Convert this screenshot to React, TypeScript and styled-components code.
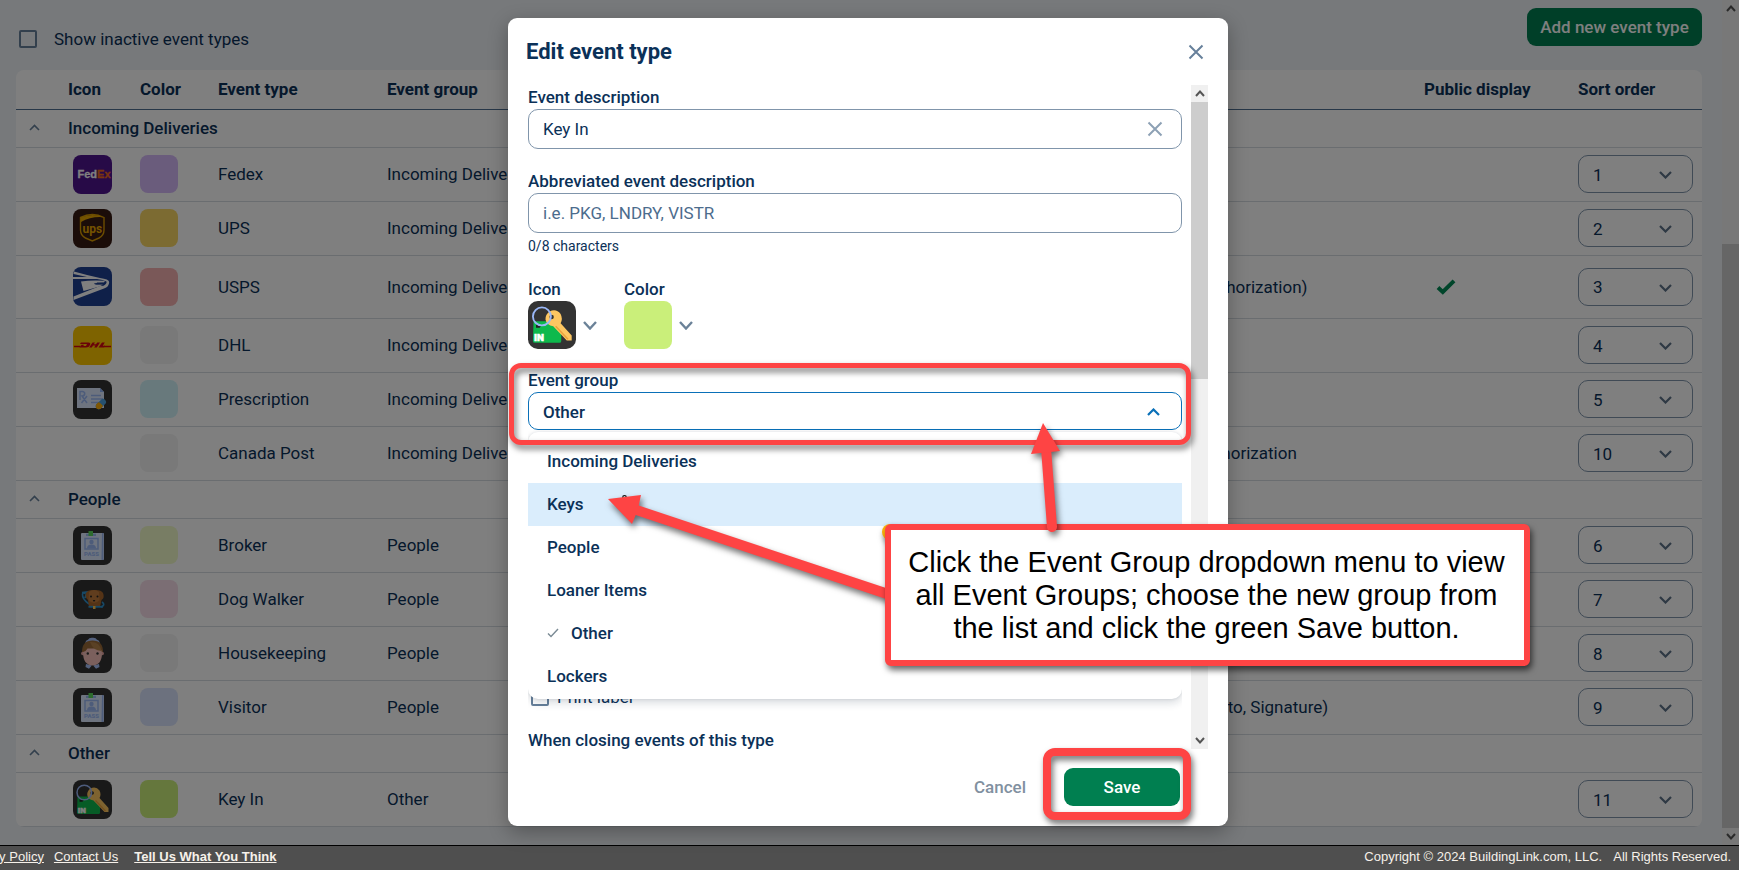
import React from 'react';
import styled, { createGlobalStyle, css } from 'styled-components';

const NAVY = '#0b3158';
const STEEL = '#8095ab';
const GREEN = '#007f50';
const RED = '#fe4444';
const UI_FONT = 'Roboto, "Liberation Sans", sans-serif';

const GlobalStyle = createGlobalStyle`
  *, *::before, *::after { box-sizing: border-box; }
  body { margin: 0; font-family: ${UI_FONT}; font-size: 17px; line-height: 24px; color: ${NAVY}; }
  button, input, select { font: inherit; color: inherit; }
  button { cursor: pointer; }
`;

/* ---------- page shell ---------- */

const Page = styled.div`
  display: flex;
  flex-direction: column;
  height: 100vh;
  overflow: hidden;
  background: #eef2f6;
`;

const Viewport = styled.div`
  position: relative;
  display: flex;
  flex: 1;
  min-height: 0;
`;

const Content = styled.main`
  flex: 1;
  min-width: 0;
  padding: 0 20px 0 16px;
  overflow: hidden;
`;

const Toolbar = styled.div`
  display: flex;
  justify-content: space-between;
  align-items: flex-start;
  height: 70px;
  padding-top: 8px;
`;

const CheckLabel = styled.label<{ $top?: number; $gap: number }>`
  display: flex;
  align-items: center;
  gap: ${(p) => p.$gap}px;
  padding-left: 3px;
  margin-top: ${(p) => p.$top ?? 0}px;
`;

const CheckBox = styled.input`
  appearance: none;
  width: 18px;
  height: 18px;
  margin: 0;
  border: 2px solid #67809b;
  border-radius: 2px;
  background: transparent;
`;

const PrimaryButton = styled.button<{ $width: number }>`
  width: ${(p) => p.$width}px;
  height: 38px;
  padding: 0;
  border: 0;
  border-radius: 9px;
  background: ${GREEN};
  color: #fff;
  font-weight: 500;
`;

/* ---------- event table ---------- */

const TablePanel = styled.div`
  background: #fff;
  border-radius: 8px;
  overflow: hidden;
`;

const Table = styled.table`
  width: 100%;
  table-layout: fixed;
  border-collapse: separate;
  border-spacing: 0;
`;

const Col = styled.col<{ $width?: number }>`
  ${(p) => p.$width && css`width: ${p.$width}px;`}
`;

const HeadCell = styled.th`
  height: 40px;
  padding: 0 0 2px;
  border-bottom: 1px solid #4e6f90;
  text-align: left;
  font-weight: 700;
`;

const GroupCell = styled.td`
  height: 38px;
  padding: 0 0 2px;
  border-bottom: 1px solid #d5dae0;
  font-weight: 500;
`;

const Cell = styled.td<{ $tall?: boolean }>`
  height: ${(p) => (p.$tall ? 63 : 54)}px;
  padding: 0 0 1px;
  border-bottom: 1px solid #d5dae0;
  white-space: nowrap;
`;

const IconHolder = styled.div`
  display: flex;
  padding-left: 5px;
`;

const Swatch = styled.div<{ $color: string }>`
  width: 38px;
  height: 38px;
  border-radius: 8px;
  background: ${(p) => p.$color};
`;

const ToggleButton = styled.button`
  display: flex;
  margin-left: 13px;
  padding: 0;
  border: 0;
  background: none;
`;

const CheckHolder = styled.div`
  display: flex;
  padding-left: 12px;
`;

const OrderBox = styled.div`
  position: relative;
  width: 115px;
  height: 38px;
`;

const OrderSelect = styled.select`
  appearance: none;
  width: 100%;
  height: 100%;
  padding: 1px 14px 0;
  border: 1px solid ${STEEL};
  border-radius: 10px;
  background: transparent;
`;

const OrderArrow = styled.span`
  position: absolute;
  right: 21px;
  top: 16px;
  display: flex;
  pointer-events: none;
`;

/* ---------- scroll bars ---------- */

const ScrollTrack = styled.div`
  display: flex;
  flex-direction: column;
  flex: none;
  width: 17px;
  background: #f0f0f0;
`;

const ScrollEnd = styled.div`
  display: flex;
  flex: none;
  align-items: center;
  justify-content: center;
  height: 17px;
`;

const ScrollSpace = styled.div<{ $grow: number; $thumb?: boolean }>`
  flex: ${(p) => p.$grow} 1 0;
  background: ${(p) => (p.$thumb ? '#cdcdcd' : 'transparent')};
`;

/* ---------- site footer ---------- */

const SiteFooter = styled.footer`
  display: flex;
  justify-content: space-between;
  height: 25px;
  padding: 0 8px 3px 0;
  align-items: center;
  border-top: 1px solid #000;
  background: #4f4f4f;
  color: #f6f1ea;
  font-family: "Liberation Sans", Arial, sans-serif;
  font-size: 13px;
  white-space: nowrap;
  overflow: hidden;
`;

const FooterLinks = styled.nav`
  display: flex;
  gap: 10px;
  margin-left: -37px;
`;

const FooterLink = styled.a<{ $strong?: boolean }>`
  color: inherit;
  ${(p) => p.$strong && css`margin-left: 6px; font-weight: 700;`}
`;

const Legal = styled.div`
  display: flex;
  gap: 11px;
`;

/* ---------- dialog ---------- */

const Backdrop = styled.div`
  position: absolute;
  inset: 0;
  display: flex;
  justify-content: center;
  padding: 18px 3px 19px 0;
  background: rgba(0, 0, 0, 0.5);
`;

const Dialog = styled.section`
  position: relative;
  display: flex;
  flex-direction: column;
  width: 720px;
  border-radius: 9px;
  background: #fff;
  box-shadow: 0 6px 20px rgba(0, 0, 0, 0.3);
`;

const DialogHeader = styled.header`
  display: flex;
  align-items: center;
  justify-content: space-between;
  height: 67px;
  padding: 0 20px 0 18px;
`;

const DialogTitle = styled.h2`
  margin: 0;
  font-size: 22px;
  line-height: 26px;
  font-weight: 700;
`;

const GhostButton = styled.button`
  display: flex;
  align-items: center;
  justify-content: center;
  width: 24px;
  height: 24px;
  padding: 0;
  border: 0;
  background: none;
`;

const DialogBody = styled.div`
  display: flex;
  gap: 9px;
  flex: 1;
  min-height: 0;
  padding: 0 20px;
`;

const Form = styled.form`
  flex: 1;
  min-width: 0;
  overflow: hidden;
`;

const Field = styled.div`
  position: relative;
  margin-bottom: 20px;
`;

const FieldLabel = styled.label`
  display: block;
  height: 24px;
  font-weight: 500;
`;

const InputFrame = styled.div`
  display: flex;
  align-items: center;
  height: 40px;
  padding: 0 14px;
  border: 1px solid ${STEEL};
  border-radius: 10px;
`;

const TextInput = styled.input`
  flex: 1;
  min-width: 0;
  padding: 0;
  border: 0;
  outline: 0;
  background: none;
  &::placeholder { color: #4c6c8d; opacity: 1; }
`;

const Helper = styled.div`
  padding-top: 2px;
  line-height: 22px;
  font-size: 14px;
`;

const PickerRow = styled.div`
  display: flex;
  gap: 27px;
  margin-bottom: 19px;
`;

const Picker = styled.button`
  display: flex;
  align-items: center;
  gap: 7px;
  padding: 0;
  border: 0;
  background: none;
`;

const PickerColor = styled.span`
  width: 48px;
  height: 48px;
  border-radius: 8px;
  background: #caef7a;
`;

const GroupTrigger = styled.button`
  display: flex;
  align-items: center;
  justify-content: space-between;
  width: 100%;
  height: 38px;
  padding: 2px 21px 0 14px;
  border: 1px solid #0a70b8;
  border-radius: 10px;
  background: #fff;
  font-weight: 500;
`;

const Menu = styled.ul`
  position: absolute;
  z-index: 1;
  top: 100%;
  left: 0;
  right: 0;
  margin: 2px 0 0;
  padding: 8px 0 1px;
  border-radius: 10px;
  background: #fff;
  box-shadow: 0 4px 8px rgba(20, 40, 60, 0.16), 0 0 3px rgba(20, 40, 60, 0.12);
  list-style: none;
`;

const MenuItem = styled.li<{ $active?: boolean }>`
  display: flex;
  align-items: center;
  gap: 12px;
  height: 43px;
  padding: 0 0 1px 19px;
  background: ${(p) => (p.$active ? '#daedfc' : 'transparent')};
  font-weight: 500;
`;

const PrintRow = styled.div`
  margin: 255px 0 22px;
`;

const SectionTitle = styled.div`
  line-height: 18px;
  font-weight: 500;
`;

const DialogFooter = styled.footer`
  display: flex;
  flex: none;
  align-items: center;
  justify-content: flex-end;
  gap: 38px;
  height: 77px;
  padding: 0 48px 1px 0;
`;

const CancelButton = styled.button`
  padding: 0;
  border: 0;
  background: none;
  color: #8190a0;
  font-weight: 500;
`;

/* ---------- tutorial marks lying over the dialog ---------- */

const Highlight = styled.div<{ $x: number; $y: number; $w: number; $h: number; $line: number }>`
  position: absolute;
  z-index: 2;
  left: ${(p) => p.$x}px;
  top: ${(p) => p.$y}px;
  width: ${(p) => p.$w}px;
  height: ${(p) => p.$h}px;
  border: ${(p) => p.$line}px solid ${RED};
  border-radius: 12px;
  filter: drop-shadow(2px 4px 3px rgba(0, 0, 0, 0.55));
  pointer-events: none;
`;

const Callout = styled.div`
  position: absolute;
  z-index: 3;
  left: 377px;
  top: 506px;
  width: 645px;
  height: 142px;
  padding: 16px 2px 16px 0;
  border: 6px solid ${RED};
  border-radius: 6px;
  background: #fff;
  box-shadow: 2px 4px 6px rgba(0, 0, 0, 0.6);
  color: #000;
  font-family: "Liberation Sans", Arial, sans-serif;
  font-size: 29px;
  line-height: 33px;
  text-align: center;
  white-space: nowrap;
`;

const Arrows = styled.svg<{ $z: number }>`
  position: absolute;
  z-index: ${(p) => p.$z};
  left: 0;
  top: 0;
  filter: drop-shadow(2px 4px 3px rgba(0, 0, 0, 0.55));
  pointer-events: none;
`;

/* ---------- drawings ---------- */

type ChevronProps = { up?: boolean; w: number; h: number; color: string; stroke?: number };

const Chevron = ({ up, w, h, color, stroke = 2 }: ChevronProps) => (
  <svg width={w} height={h} viewBox={`0 0 ${w} ${h}`} aria-hidden="true">
    <path
      d={up ? `M1 ${h - 1}L${w / 2} 1.5L${w - 1} ${h - 1}` : `M1 1L${w / 2} ${h - 1.5}L${w - 1} 1`}
      fill="none"
      stroke={color}
      strokeWidth={stroke}
    />
  </svg>
);

const Cross = ({ color }: { color: string }) => (
  <svg width="16" height="16" viewBox="0 0 16 16" aria-hidden="true">
    <path d="M1.5 1.5L14.5 14.5M14.5 1.5L1.5 14.5" stroke={color} strokeWidth="2" />
  </svg>
);

const Tick = () => (
  <svg width="20" height="16" viewBox="0 0 20 16" aria-label="Yes" role="img">
    <path d="M2 8.5L6.8 13L18 1.8" fill="none" stroke="#008a55" strokeWidth="4" />
  </svg>
);

const Tile = ({ size = 39, fill, children }: { size?: number; fill: string; children: React.ReactNode }) => (
  <svg width={size} height={size} viewBox="0 0 39 39" aria-hidden="true">
    <rect width="39" height="39" rx="8" fill={fill} />
    {children}
  </svg>
);

const FedexIcon = () => (
  <Tile fill="#4f148f">
    <text x="4.5" y="23" fontFamily="Liberation Sans, sans-serif" fontSize="11" fontWeight="700" fill="#fff" stroke="#fff" strokeWidth="0.3">
      Fed<tspan fill="#f26a1b" stroke="#f26a1b">Ex</tspan>
    </text>
  </Tile>
);

const UpsIcon = () => (
  <Tile fill="#361a13">
    <path d="M7.5 8.5Q19.5 2.5 31 8.5V21Q31 26.5 26 29L19.3 32L12.5 29Q7.5 26.5 7.5 21Z" fill="none" stroke="#d99a00" strokeWidth="1.4" />
    <path d="M8 8.5Q19 3.5 30.6 8.2Q18 7.2 8 13Z" fill="#e9a600" />
    <text x="19.3" y="23.5" textAnchor="middle" fontFamily="Roboto, sans-serif" fontSize="12" fontWeight="700" fill="#e9a600">ups</text>
  </Tile>
);

const UspsIcon = () => (
  <Tile fill="#1f4092">
    <path d="M1 4.5Q15 8.5 27 11Q36 12 36.2 15Q36 20 31 21.5L0.5 33V29.5L27 19L30.5 18.8Q34 17 33.5 14.5Q30 12.5 24 12H0V10H14L0.5 7Z" fill="#fff" />
    <path d="M8 14.5Q18 13 32 13.8L31 15.5H24L23 17.5H30L26.5 19.5L10.5 24Z" fill="#fff" />
    <path d="M21 16.3L31 15.8L30 17.3L22 17.6Z" fill="#1f4092" />
  </Tile>
);

const DhlIcon = () => (
  <Tile fill="#fdc700">
    <path d="M1 20.5H7.5M31 20.5H38" stroke="#d40511" strokeWidth="1.6" />
    <path d="M8 16.5H15.5Q18 16.8 17 19Q16 21.5 13 21.5H6.5L8.6 18.8H11L10.3 20H13L14 18H7ZM19.5 16.5H22L20.8 18.3H23L24.2 16.5H27L23.8 21.5H21.2L22.4 19.5H20L18.8 21.5H16.2ZM29 16.5H31.8L29.8 19.8H32L31 21.5H25.5Z" fill="#d40511" />
  </Tile>
);

const RxIcon = () => (
  <Tile fill="#333">
    <path d="M4 8H27L31 12V28H4Z" fill="#dce8ff" />
    <path d="M27 8L31 12H27Z" fill="#8fb3f8" />
    <path d="M7 20V11.5H9.5Q12 12 11.7 14Q11.3 16 9 16L14 23M14 16L8.5 23" fill="none" stroke="#9bb8f5" strokeWidth="1.5" />
    <path d="M18 15.5H28M18 19H30M18 22.5H26" stroke="#9bb8f5" strokeWidth="1.3" />
    <path d="M25.8 26.2L30 22" stroke="#4da3e0" strokeWidth="6" strokeLinecap="round" />
    <path d="M25.8 26.2L28 24" stroke="#fcae0d" strokeWidth="6" />
    <circle cx="25.8" cy="26.2" r="3" fill="#fcae0d" />
  </Tile>
);

const PassIcon = () => (
  <Tile fill="#333">
    <rect x="8" y="7" width="23" height="27" rx="1" fill="#dce8ff" />
    <path d="M29 7H30.5V34H28.5Z" fill="#9bb8f5" />
    <rect x="12" y="12.5" width="13" height="10.5" fill="none" stroke="#9bb8f5" strokeWidth="1.5" />
    <circle cx="18.5" cy="16" r="2.2" fill="#9bb8f5" />
    <path d="M14 22.5Q14 18.5 18.5 18.5Q23 18.5 23 22.5Z" fill="#9bb8f5" />
    <path d="M13 7.8H23V10H13Z" fill="#9bb8f5" />
    <path d="M15.5 5H20V10H15.5Z" fill="#5bd65b" />
    <text x="18.6" y="30" textAnchor="middle" fontFamily="Roboto, sans-serif" fontSize="6" fontWeight="900" fill="#9bb8f5">PASS</text>
  </Tile>
);

const DogIcon = () => (
  <Tile fill="#333">
    <path d="M16 24Q9 19 9.5 14Q10.5 12 12.5 13.5M9 12.5L14 12L12 18M28 27Q33 25 29 22" fill="none" stroke="#2f93cf" strokeWidth="1.6" />
    <path d="M13 13Q15 9.5 21 10Q28 9.5 30 13Q32 18 28.5 20L27 27H16L15 20Q11.5 17 13 13Z" fill="#a9672c" />
    <path d="M16 12Q21 8 26 12L26.5 20Q21 26 15.5 20Z" fill="#c07b3c" />
    <circle cx="18" cy="16.5" r="1" fill="#222" />
    <circle cx="24.5" cy="16.5" r="1" fill="#222" />
    <path d="M19.8 20H22.4L21 22Z" fill="#222" />
    <path d="M15.5 26.8H30" stroke="#2f93cf" strokeWidth="1.8" />
    <path d="M20 26H22.5V29H20Z" fill="#ffc24a" />
  </Tile>
);

const MaidIcon = () => (
  <Tile fill="#333">
    <path d="M12.5 10Q12 6.5 15 5.8Q16 3.5 19.5 3.8Q23 3.5 24 5.8Q27 6.5 26.5 10Z" fill="#a9c3fb" />
    <path d="M9 18Q9 6.5 19.5 6.5Q30 6.5 30 18L28 22H11Z" fill="#9a6a38" />
    <path d="M13 30L18.8 31.5L16 34.8L12.5 33ZM26 30L20.2 31.5L23 34.8L26.5 33Z" fill="#a9c3fb" />
    <circle cx="9.8" cy="19.5" r="1.8" fill="#e8a9a4" />
    <circle cx="29.2" cy="19.5" r="1.8" fill="#e8a9a4" />
    <path d="M10 18Q13 17.5 14.5 14.5H27Q29 16 29 19Q29 31 19.5 31.5Q10 31 10 18Z" fill="#f6c0bb" />
    <path d="M17 8Q27 7.5 28.5 17Q20 16.5 17 8Z" fill="#b5824a" />
    <circle cx="14.8" cy="19.5" r="1.2" fill="#333" />
    <circle cx="24.5" cy="19.5" r="1.2" fill="#333" />
  </Tile>
);

const KeyIcon = ({ size }: { size?: number }) => (
  <Tile fill="#333" size={size}>
    <path d="M4.5 16.5H20L27 25V32.5Q27 34 25.5 34H5.5Q4 34 4 32.5Z" fill="#0db94c" />
    <path d="M6.5 19.5H11L9.5 21.8H6.5Z" fill="#222" />
    <path d="M17.5 8.5Q23 6 26.5 10.5Q28.5 14.5 26.5 18L35.5 28V32H31.5L20.5 20.5Q15 19.5 14.2 15Q14 11 17.5 8.5Z" fill="#fdc661" />
    <path d="M22.5 20.5L32.5 31" stroke="#e9a13c" strokeWidth="1.2" />
    <circle cx="19.2" cy="13" r="1.8" fill="#333" />
    <circle cx="11.3" cy="12.5" r="7.3" fill="none" stroke="#9bb8f8" strokeWidth="1.5" />
    <text x="4.8" y="32.5" fontFamily="Roboto, sans-serif" fontSize="8" fontWeight="900" fill="#fff" stroke="#fff" strokeWidth="0.5">IN</text>
  </Tile>
);

/* ---------- data ---------- */

type EventRow = {
  name: string;
  color: string;
  order: number;
  icon?: React.ReactNode;
  details?: string;
  shown?: boolean;
  tall?: boolean;
};

const groups: { title: string; rows: EventRow[] }[] = [
  {
    title: 'Incoming Deliveries',
    rows: [
      { name: 'Fedex', color: '#d4b8f8', order: 1, icon: <FedexIcon /> },
      { name: 'UPS', color: '#f8d664', order: 2, icon: <UpsIcon /> },
      { name: 'USPS', color: '#f4b0b0', order: 3, icon: <UspsIcon />, details: 'Open (Signature, Authorization)', shown: true, tall: true },
      { name: 'DHL', color: '#f2f2f2', order: 4, icon: <DhlIcon /> },
      { name: 'Prescription', color: '#d0f3f9', order: 5, icon: <RxIcon /> },
      { name: 'Canada Post', color: '#f2f2f2', order: 10, details: 'Signature needs authorization' },
    ],
  },
  {
    title: 'People',
    rows: [
      { name: 'Broker', color: '#f0fac8', order: 6, icon: <PassIcon /> },
      { name: 'Dog Walker', color: '#f6dce8', order: 7, icon: <DogIcon /> },
      { name: 'Housekeeping', color: '#f2f2f2', order: 8, icon: <MaidIcon /> },
      { name: 'Visitor', color: '#d9e3fc', order: 9, icon: <PassIcon />, details: 'Open and close (Photo, Signature)' },
    ],
  },
  { title: 'Other', rows: [{ name: 'Key In', color: '#caef7a', order: 11, icon: <KeyIcon /> }] },
];

const options = ['Incoming Deliveries', 'Keys', 'People', 'Loaner Items', 'Other', 'Lockers'];

const Scrollbar = ({ before, thumb, after }: { before: number; thumb: number; after: number }) => (
  <ScrollTrack aria-hidden="true">
    <ScrollEnd><Chevron up w={10} h={7} color="#555" /></ScrollEnd>
    <ScrollSpace $grow={before} />
    <ScrollSpace $grow={thumb} $thumb />
    <ScrollSpace $grow={after} />
    <ScrollEnd><Chevron w={10} h={7} color="#555" /></ScrollEnd>
  </ScrollTrack>
);

const EventTable = () => (
  <TablePanel>
    <Table>
      <colgroup>
        <Col $width={52} />
        <Col $width={72} />
        <Col $width={78} />
        <Col $width={169} />
        <Col $width={684} />
        <Col />
        <Col $width={154} />
        <Col $width={124} />
      </colgroup>
      <thead>
        <tr>
          <HeadCell aria-label="Expand" />
          <HeadCell>Icon</HeadCell>
          <HeadCell>Color</HeadCell>
          <HeadCell>Event type</HeadCell>
          <HeadCell>Event group</HeadCell>
          <HeadCell aria-label="Details" />
          <HeadCell>Public display</HeadCell>
          <HeadCell>Sort order</HeadCell>
        </tr>
      </thead>
      {groups.map((group) => (
        <tbody key={group.title}>
          <tr>
            <GroupCell>
              <ToggleButton aria-label={`Collapse ${group.title}`}>
                <Chevron up w={11} h={7} color="#67809b" stroke={1.6} />
              </ToggleButton>
            </GroupCell>
            <GroupCell colSpan={7}>{group.title}</GroupCell>
          </tr>
          {group.rows.map((row) => (
            <tr key={row.name}>
              <Cell $tall={row.tall} />
              <Cell><IconHolder>{row.icon}</IconHolder></Cell>
              <Cell><Swatch $color={row.color} /></Cell>
              <Cell>{row.name}</Cell>
              <Cell>{group.title}</Cell>
              <Cell>{row.details}</Cell>
              <Cell>{row.shown && <CheckHolder><Tick /></CheckHolder>}</Cell>
              <Cell>
                <OrderBox>
                  <OrderSelect aria-label={`Sort order of ${row.name}`} defaultValue={row.order}>
                    <option>{row.order}</option>
                  </OrderSelect>
                  <OrderArrow><Chevron w={13} h={8} color="#5d7288" stroke={2.2} /></OrderArrow>
                </OrderBox>
              </Cell>
            </tr>
          ))}
        </tbody>
      ))}
    </Table>
  </TablePanel>
);

const TutorialMarks = () => (
  <>
    <Highlight $x={1} $y={345} $w={682} $h={82} $line={5} />
    <Highlight $x={535} $y={730} $w={148} $h={72} $line={8} />
    <Arrows $z={2} width="720" height="808" viewBox="508 18 720 808" aria-hidden="true">
      <circle cx="890" cy="532" r="8" fill="#fcb10a" />
      <circle cx="624.5" cy="497.5" r="1.8" fill="#fff" stroke="#111" strokeWidth="1.2" />
      <path d="M608 499L641 495L638.7 505.5L892 590V601L635.7 515L632 524Z" fill={RED} />
    </Arrows>
    <Callout>
      Click the Event Group dropdown menu to view
      <br />
      all Event Groups; choose the new group from
      <br />
      the list and click the green Save button.
    </Callout>
    <Arrows $z={4} width="720" height="808" viewBox="508 18 720 808" aria-hidden="true">
      <path d="M1046 448L1052 527" stroke={RED} strokeWidth="10" strokeLinecap="round" />
      <path d="M1043 423L1060 451L1031 454Z" fill={RED} />
    </Arrows>
  </>
);

const EditDialog = () => (
  <Dialog role="dialog" aria-labelledby="dialog-title">
    <DialogHeader>
      <DialogTitle id="dialog-title">Edit event type</DialogTitle>
      <GhostButton aria-label="Close"><Cross color="#67809b" /></GhostButton>
    </DialogHeader>
    <DialogBody>
      <Form onSubmit={(e) => e.preventDefault()}>
        <Field>
          <FieldLabel htmlFor="description">Event description</FieldLabel>
          <InputFrame>
            <TextInput id="description" defaultValue="Key In" />
            <GhostButton type="button" aria-label="Clear"><Cross color="#8da1b5" /></GhostButton>
          </InputFrame>
        </Field>
        <Field>
          <FieldLabel htmlFor="short">Abbreviated event description</FieldLabel>
          <InputFrame>
            <TextInput id="short" placeholder="i.e. PKG, LNDRY, VISTR" />
          </InputFrame>
          <Helper>0/8 characters</Helper>
        </Field>
        <PickerRow>
          <div>
            <FieldLabel htmlFor="icon">Icon</FieldLabel>
            <Picker id="icon" type="button">
              <KeyIcon size={48} />
              <Chevron w={14} h={9} color="#6b8298" stroke={2.4} />
            </Picker>
          </div>
          <div>
            <FieldLabel htmlFor="color">Color</FieldLabel>
            <Picker id="color" type="button">
              <PickerColor />
              <Chevron w={14} h={9} color="#6b8298" stroke={2.4} />
            </Picker>
          </div>
        </PickerRow>
        <Field>
          <FieldLabel htmlFor="group">Event group</FieldLabel>
          <GroupTrigger id="group" type="button" aria-haspopup="listbox" aria-expanded="true">
            Other
            <Chevron up w={13} h={8} color="#0a70b8" stroke={2.2} />
          </GroupTrigger>
          <Menu role="listbox">
            {options.map((option) => (
              <MenuItem key={option} role="option" aria-selected={option === 'Other'} $active={option === 'Keys'}>
                {option === 'Other' && (
                  <svg width="12" height="10" viewBox="0 0 12 10" aria-hidden="true">
                    <path d="M1 5.5L4 8.5L11 1" fill="none" stroke="#7a8a94" strokeWidth="1.4" />
                  </svg>
                )}
                {option}
              </MenuItem>
            ))}
          </Menu>
        </Field>
        <PrintRow>
          <CheckLabel $gap={8}>
            <CheckBox type="checkbox" />
            Print label
          </CheckLabel>
        </PrintRow>
        <SectionTitle>When closing events of this type</SectionTitle>
      </Form>
      <Scrollbar before={0} thumb={277} after={353} />
    </DialogBody>
    <DialogFooter>
      <CancelButton>Cancel</CancelButton>
      <PrimaryButton $width={116}>Save</PrimaryButton>
    </DialogFooter>
    <TutorialMarks />
  </Dialog>
);

export default function App() {
  return (
    <Page>
      <GlobalStyle />
      <Viewport>
        <Content>
          <Toolbar>
            <CheckLabel $gap={17} $top={19}>
              <CheckBox type="checkbox" />
              Show inactive event types
            </CheckLabel>
            <PrimaryButton $width={175}>Add new event type</PrimaryButton>
          </Toolbar>
          <EventTable />
        </Content>
        <Scrollbar before={227} thumb={584} after={0} />
        <Backdrop>
          <EditDialog />
        </Backdrop>
      </Viewport>
      <SiteFooter>
        <FooterLinks>
          <FooterLink href="#privacy">Privacy Policy</FooterLink>
          <FooterLink href="#contact">Contact Us</FooterLink>
          <FooterLink href="#feedback" $strong>Tell Us What You Think</FooterLink>
        </FooterLinks>
        <Legal>
          <span>Copyright © 2024 BuildingLink.com, LLC.</span>
          <span>All Rights Reserved.</span>
        </Legal>
      </SiteFooter>
    </Page>
  );
}
